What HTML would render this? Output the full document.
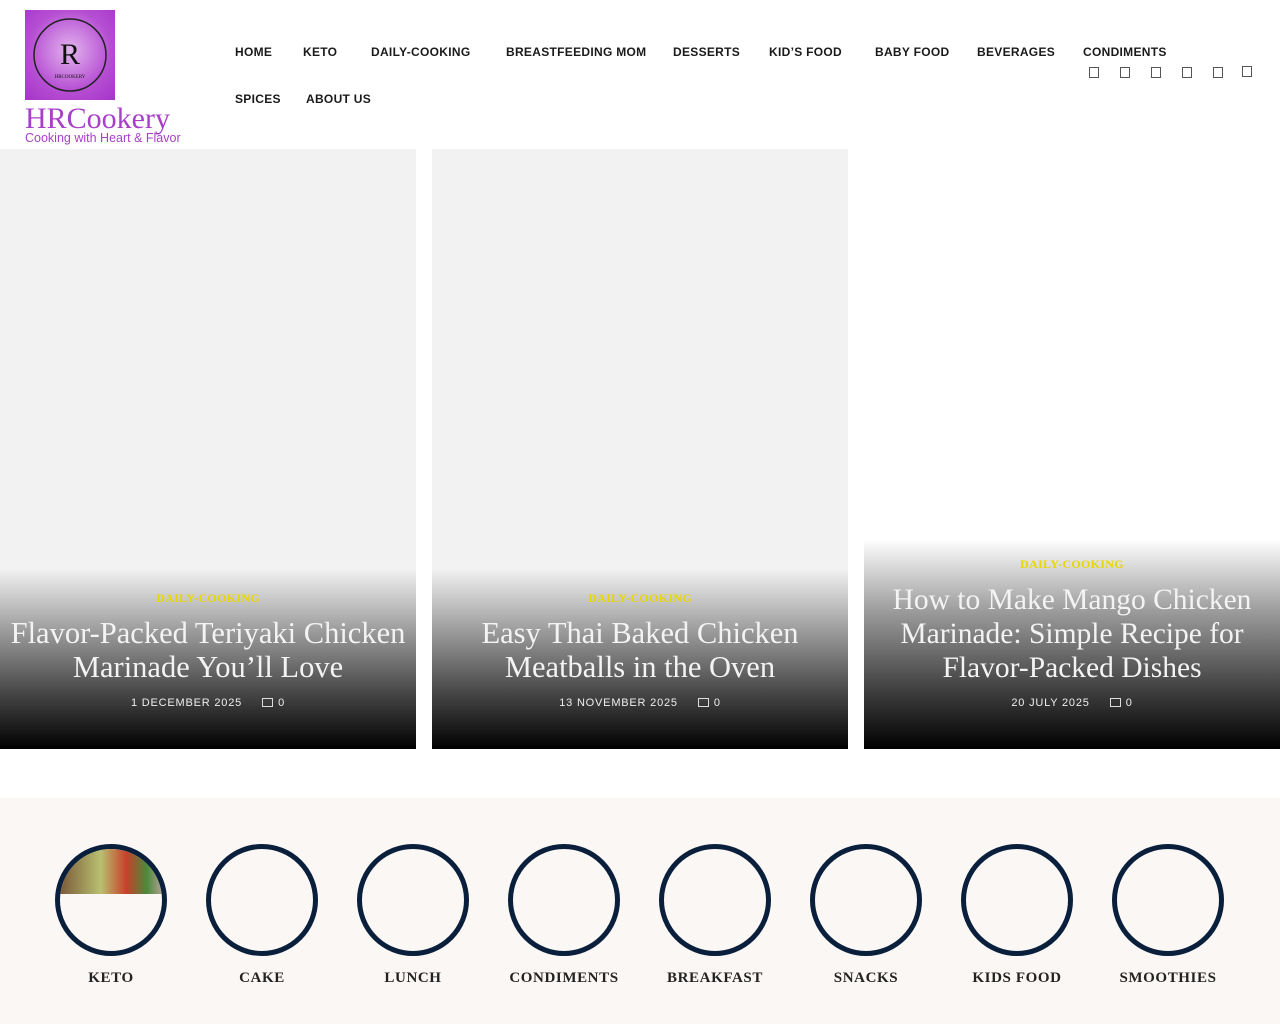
<!DOCTYPE html>
<html><head><meta charset="utf-8"><style>
*{margin:0;padding:0;box-sizing:border-box}
body{width:1280px;height:1024px;background:#fff;position:relative;overflow:hidden;font-family:"Liberation Sans",sans-serif}
.nav a{position:absolute;font:bold 12px "Liberation Sans",sans-serif;letter-spacing:.3px;color:#1a1a1a;text-decoration:none;white-space:nowrap}
.card{position:absolute;top:149px;width:416px;height:600px;overflow:hidden}
.grad{position:absolute;left:0;right:0;bottom:0;background:linear-gradient(to bottom,rgba(242,242,242,0),#9a9a9a 35%,#444 70%,#000)}
.cat{position:absolute;left:0;right:0;text-align:center;color:#e8d600;font:bold 12px "Liberation Serif",serif;letter-spacing:.3px}
.ttl{position:absolute;left:-10px;right:-10px;text-align:center;color:#f3f3f3;font:30.5px/34px "Liberation Serif",serif}
.meta{position:absolute;left:0;right:0;text-align:center;color:#eee;font:11px "Liberation Sans",sans-serif;letter-spacing:.8px}
.meta i{display:inline-block;width:11px;height:9px;border:1px solid #ddd;margin:0 5px 0 20px;vertical-align:-1px}
.circ{position:absolute;top:844px;width:112px;height:112px;border:5px solid #0a1f3c;border-radius:50%;overflow:hidden}
.lab{position:absolute;top:970px;width:150px;text-align:center;font:bold 15px "Liberation Serif",serif;letter-spacing:.6px;color:#222}
</style></head><body>
<div style="position:absolute;left:25px;top:10px;width:90px;height:90px;background:radial-gradient(circle at 50% 45%,#e2b4ee,#b64fd3 60%,#a534c8)">
<svg width="90" height="90"><circle cx="45" cy="45" r="36" fill="none" stroke="#222" stroke-width="1.5"/><text x="45" y="54" text-anchor="middle" font-family="Liberation Serif" font-size="30" fill="#111">R</text><text x="45" y="68" text-anchor="middle" font-family="Liberation Serif" font-size="5" fill="#111">HRCOOKERY</text></svg></div>
<div style="position:absolute;left:25px;top:101px;font:30px/36px 'Liberation Serif',serif;color:#a83fc9">HRCookery</div>
<div style="position:absolute;left:25px;top:131px;font:12.5px 'Liberation Sans',sans-serif;color:#a83fc9">Cooking with Heart &amp; Flavor</div>
<div class="nav">
<a style="left:235px;top:45px">HOME</a><a style="left:303px;top:45px">KETO</a><a style="left:371px;top:45px">DAILY-COOKING</a><a style="left:506px;top:45px">BREASTFEEDING MOM</a><a style="left:673px;top:45px">DESSERTS</a><a style="left:769px;top:45px">KID’S FOOD</a><a style="left:875px;top:45px">BABY FOOD</a><a style="left:977px;top:45px">BEVERAGES</a><a style="left:1083px;top:45px">CONDIMENTS</a>
<a style="left:235px;top:92px">SPICES</a><a style="left:306px;top:92px">ABOUT US</a>
</div>
<div style="position:absolute;top:67px;left:1089px;font-size:0">
<span style="position:absolute;left:0;width:10px;height:11px;border:1px solid #555"></span><span style="position:absolute;left:31px;width:10px;height:11px;border:1px solid #555"></span><span style="position:absolute;left:62px;width:10px;height:11px;border:1px solid #555"></span><span style="position:absolute;left:93px;width:10px;height:11px;border:1px solid #555"></span><span style="position:absolute;left:124px;width:10px;height:11px;border:1px solid #555"></span><span style="position:absolute;left:153px;top:-1px;width:10px;height:11px;border:1px solid #555"></span></div>

<div class="card" style="left:0;background:#f2f2f2"><div class="grad" style="top:420px"></div>
<div class="cat" style="top:442px">DAILY-COOKING</div>
<div class="ttl" style="top:467px">Flavor-Packed Teriyaki Chicken<br>Marinade You’ll Love</div>
<div class="meta" style="top:548px">1 DECEMBER 2025<i></i>0</div></div>
<div class="card" style="left:432px;background:#f2f2f2"><div class="grad" style="top:420px"></div>
<div class="cat" style="top:442px">DAILY-COOKING</div>
<div class="ttl" style="top:467px">Easy Thai Baked Chicken<br>Meatballs in the Oven</div>
<div class="meta" style="top:548px">13 NOVEMBER 2025<i></i>0</div></div>
<div class="card" style="left:864px;background:#fff"><div class="grad" style="top:390px"></div>
<div class="cat" style="top:408px">DAILY-COOKING</div>
<div class="ttl" style="top:434px;font-size:29.5px">How to Make Mango Chicken<br>Marinade: Simple Recipe for<br>Flavor-Packed Dishes</div>
<div class="meta" style="top:548px">20 JULY 2025<i></i>0</div></div>

<div style="position:absolute;left:0;top:798px;width:1280px;height:226px;background:#faf7f4"></div>
<div class="circ" style="left:55px"><div style="position:absolute;left:0;top:0;width:102px;height:45px;background:linear-gradient(90deg,#7a5a3a,#b8c070 40%,#c8402a 65%,#4a8a3a 85%,#b0a090)"></div></div>
<div class="circ" style="left:206px"></div><div class="circ" style="left:357px"></div><div class="circ" style="left:508px"></div><div class="circ" style="left:659px"></div><div class="circ" style="left:810px"></div><div class="circ" style="left:961px"></div><div class="circ" style="left:1112px"></div>
<div class="lab" style="left:36px">KETO</div><div class="lab" style="left:187px">CAKE</div><div class="lab" style="left:338px">LUNCH</div><div class="lab" style="left:489px">CONDIMENTS</div><div class="lab" style="left:640px">BREAKFAST</div><div class="lab" style="left:791px">SNACKS</div><div class="lab" style="left:942px">KIDS FOOD</div><div class="lab" style="left:1093px">SMOOTHIES</div>
</body></html>
